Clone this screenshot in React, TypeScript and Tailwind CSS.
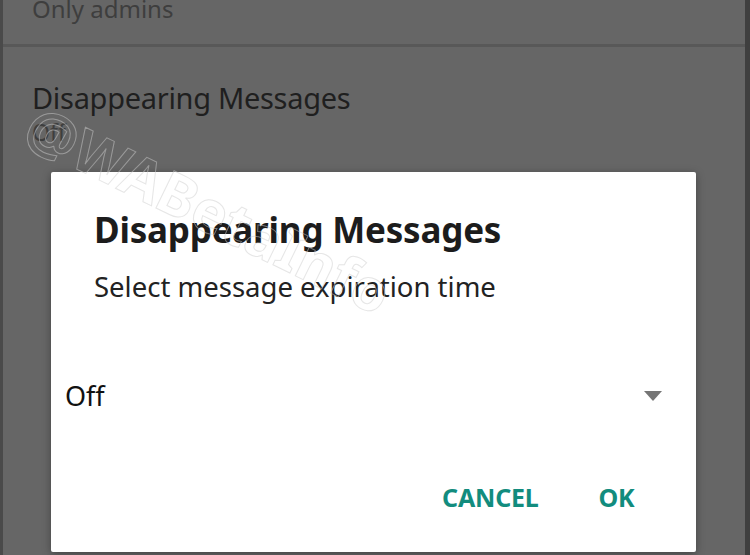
import React from "react";

export default function App() {
  return (
    <div
      className="relative w-[750px] h-[555px] overflow-hidden bg-[#666666]"
      style={{ fontFamily: '"Noto Sans", "Open Sans", sans-serif' }}
    >
      <div className="absolute left-0 top-0 h-full w-[3px] bg-[#4a4a4a]" />
      <div className="absolute right-0 top-0 h-full w-[5px] bg-[#3f3f3f]" />

      {/* background settings list */}
      <div className="flex flex-col">
        <div className="h-[47px] pl-[32px] border-b-[3px] border-[#585858]">
          <p className="text-[24px] leading-[24px] -mt-[3px] text-[#3e3e3e]">Only admins</p>
        </div>
        <div className="pl-[32px] pt-[34px]">
          <p className="text-[29px] leading-[34px] text-[#1f1f1f] tracking-[-0.3px]">Disappearing Messages</p>
          <p className="mt-[3px] text-[23px] leading-[28px] text-[#3e3e3e]">Off</p>
        </div>
      </div>

      {/* dialog */}
      <div className="absolute left-[51px] top-[172px] w-[645px] h-[380px] bg-white rounded-[2px] shadow-[0_2px_8px_rgba(0,0,0,0.35)] flex flex-col">
        <div className="pl-[43px] pt-[36px]">
          <h2 className="text-[35px] leading-[44px] font-bold text-[#1c1c1c] tracking-[-0.2px]">
            Disappearing Messages
          </h2>
          <p className="mt-[19px] text-[27.5px] leading-[32px] text-[#222]">Select message expiration time</p>
        </div>
        <div className="mt-[77px] flex items-center justify-between pl-[14px] pr-[34px]">
          <span className="text-[27px] leading-[32px] text-[#111]">Off</span>
          <svg width="18" height="10" viewBox="0 0 18 10">
            <path d="M0 0h18L9 10z" fill="#757575" />
          </svg>
        </div>
        <div className="mt-auto mb-[40px] flex justify-end gap-[60px] pr-[62px]">
          <span className="text-[25px] leading-[30px] font-bold text-[#128C7E] tracking-[-0.2px]">CANCEL</span>
          <span className="text-[25px] leading-[30px] font-bold text-[#128C7E] tracking-[-0.5px]">OK</span>
        </div>
      </div>

      {/* watermark */}
      <div
        className="absolute left-[30px] top-[92px] rotate-[26deg] origin-left text-[58px] leading-[60px] font-bold text-transparent pointer-events-none"
        style={{ WebkitTextStroke: "1px rgba(205,205,205,0.5)" }}
      >
        @WABetaInfo
      </div>
    </div>
  );
}
